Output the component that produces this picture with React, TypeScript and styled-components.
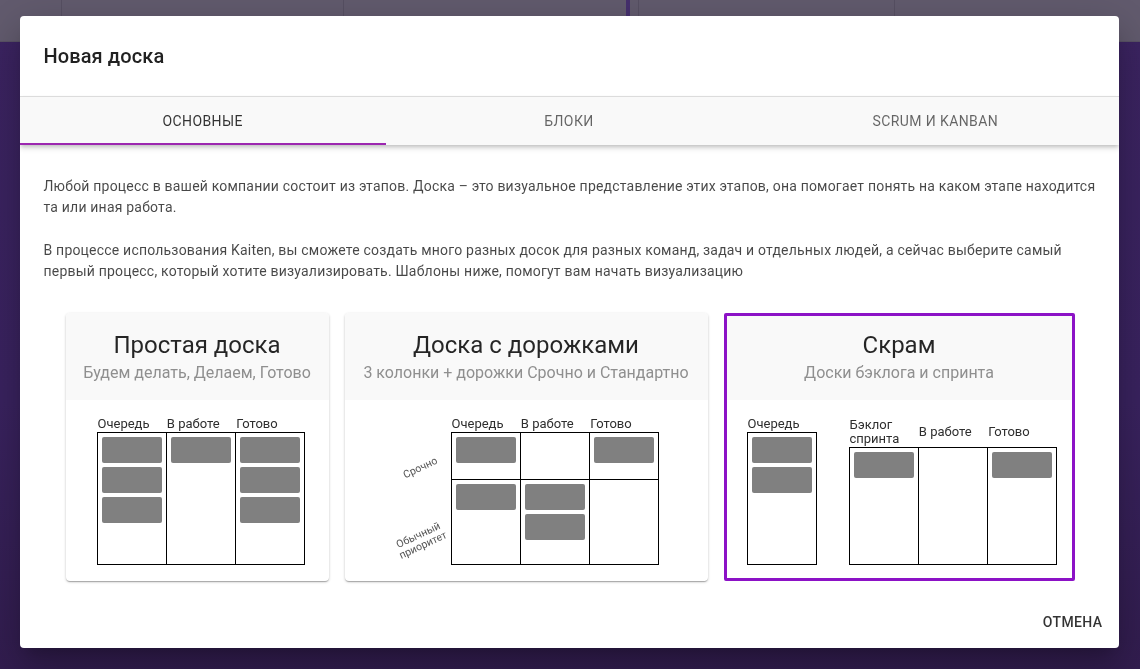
import React, { useState } from 'react';
import styled, { createGlobalStyle, css } from 'styled-components';

const GlobalStyle = createGlobalStyle`
  html, body {
    margin: 0;
    padding: 0;
    height: 100%;
  }
  body {
    font-family: Roboto, "Noto Sans", Arial, sans-serif;
    overflow: hidden;
  }
  #root {
    height: 100%;
  }
`;

// dimmed board that sits behind the dialog
const Page = styled.div`
  height: 100vh;
  display: flex;
  flex-direction: column;
  background: linear-gradient(180deg, #3c2462 0%, #3a2360 60%, #321d4f 100%);
`;

const BoardBar = styled.div`
  height: 41px;
  display: flex;
  background: #625b6e;
  border-bottom: 1px solid #5a5366;
`;

const BarCell = styled.div<{ $w: number; $accent?: boolean }>`
  width: ${({ $w }) => $w}px;
  flex: none;
  border-right: 1px solid ${({ $accent }) => ($accent ? '#46306e' : '#575063')};
  ${({ $accent }) =>
    $accent &&
    css`
      border-right-width: 4px;
    `}
`;

const Overlay = styled.div`
  position: fixed;
  inset: 0;
  display: flex;
  align-items: flex-start;
  justify-content: center;
  padding-top: 16px;
  box-sizing: border-box;
`;

const Dialog = styled.div`
  width: 1099px;
  height: 632px;
  margin-left: -2px;
  background: #fff;
  border-radius: 4px;
  display: flex;
  flex-direction: column;
  overflow: hidden;
  box-shadow: 0 11px 15px -7px rgba(0, 0, 0, 0.2), 0 24px 38px 3px rgba(0, 0, 0, 0.14),
    0 9px 46px 8px rgba(0, 0, 0, 0.12);
`;

const Title = styled.h2`
  margin: 0;
  padding: 24px 24px;
  font-size: 20px;
  line-height: 32px;
  font-weight: 500;
  color: rgba(0, 0, 0, 0.87);
  letter-spacing: 0.1px;
`;

const TabBar = styled.div`
  display: flex;
  background: #f9f9f9;
  border-top: 1px solid #dcdcdc;
  box-shadow: 0 2px 4px -1px rgba(0, 0, 0, 0.2), 0 4px 5px 0 rgba(0, 0, 0, 0.1);
  position: relative;
  z-index: 1;
`;

const Tab = styled.button<{ $active?: boolean }>`
  all: unset;
  flex: 1;
  height: 48px;
  display: flex;
  align-items: center;
  justify-content: center;
  font-family: Roboto, sans-serif;
  font-size: 14px;
  letter-spacing: 0.4px;
  text-transform: uppercase;
  cursor: pointer;
  box-sizing: border-box;
  color: ${({ $active }) => ($active ? 'rgba(0,0,0,0.8)' : 'rgba(0,0,0,0.6)')};
  border-bottom: 2px solid ${({ $active }) => ($active ? '#9c27b0' : 'transparent')};
  padding-top: 2px;
`;

const Content = styled.div`
  flex: 1;
  padding: 31px 18px 0 24px;
`;

const Text = styled.p`
  margin: 0 0 22px;
  font-size: 14px;
  line-height: 21px;
  letter-spacing: 0.2px;
  color: rgba(0, 0, 0, 0.72);
`;

const Templates = styled.div`
  display: flex;
  justify-content: center;
  gap: 16px;
  margin-top: 31px;
  padding-right: 4px;
`;

const Card = styled.div<{ $w: number; $selected?: boolean }>`
  width: ${({ $w }) => $w}px;
  height: 268px;
  box-sizing: border-box;
  border-radius: 4px;
  background: #fff;
  overflow: hidden;
  cursor: pointer;
  display: flex;
  flex-direction: column;
  ${({ $selected }) =>
    $selected
      ? css`
          border: 3px solid #8c12c6;
          border-radius: 2px;
        `
      : css`
          box-shadow: 0 1px 3px rgba(0, 0, 0, 0.2), 0 1px 1px rgba(0, 0, 0, 0.14),
            0 2px 1px -1px rgba(0, 0, 0, 0.12);
        `}
`;

const CardHead = styled.div<{ $selected?: boolean }>`
  background: #f9f9f9;
  text-align: center;
  padding: ${({ $selected }) => ($selected ? '13px' : '16px')} 8px 15px;
`;

const CardTitle = styled.div`
  font-size: 24px;
  line-height: 32px;
  color: rgba(0, 0, 0, 0.85);
`;

const CardSub = styled.div`
  font-size: 16px;
  line-height: 24px;
  color: #8f8f8f;
  white-space: nowrap;
`;

const CardBody = styled.div<{ $pl: number; $selected?: boolean }>`
  flex: 1;
  display: flex;
  align-items: flex-end;
  gap: 32px;
  padding: 0 0 ${({ $selected }) => ($selected ? 13 : 16)}px ${({ $pl }) => $pl}px;
`;

const Board = styled.div<{ $w: number }>`
  width: ${({ $w }) => $w}px;
  display: flex;
  flex-direction: column;
`;

const Heads = styled.div<{ $cols: number }>`
  display: grid;
  grid-template-columns: repeat(${({ $cols }) => $cols}, 1fr);
  align-items: center;
  padding-bottom: 1px;
`;

const Head = styled.div`
  font-size: 13px;
  line-height: 14px;
  color: #2e2e2e;
  padding-left: 1px;
`;

const Table = styled.div<{ $cols: number; $rows: string; $h: number }>`
  height: ${({ $h }) => $h}px;
  box-sizing: border-box;
  border: 1px solid #000;
  display: grid;
  grid-template-columns: repeat(${({ $cols }) => $cols}, 1fr);
  grid-template-rows: ${({ $rows }) => $rows};
`;

const Cell = styled.div<{ $first?: boolean; $top?: boolean }>`
  display: flex;
  flex-direction: column;
  gap: 4px;
  padding: 4px;
  border-left: ${({ $first }) => ($first ? 'none' : '1px solid #000')};
  border-top: ${({ $top }) => ($top ? '1px solid #000' : 'none')};
`;

const Sticker = styled.div`
  height: 26px;
  width: 60px;
  border-radius: 2px;
  background: #808080;
`;

const Lanes = styled.div`
  width: 56px;
  height: 133px;
  display: grid;
  grid-template-rows: 47px 1fr;
`;

const Lane = styled.div<{ $pb: number }>`
  display: flex;
  align-items: flex-end;
  justify-content: center;
  padding-bottom: ${({ $pb }) => $pb}px;
`;

const LaneLabel = styled.span`
  display: block;
  font-size: 10.5px;
  line-height: 11px;
  color: #555;
  text-align: center;
  transform: rotate(-25deg);
  margin-right: 12px;
`;

const Row = styled.div`
  display: flex;
  align-items: flex-end;
`;

const Footer = styled.div`
  display: flex;
  justify-content: flex-end;
  padding: 8px 8px 8px;
`;

const Button = styled.button`
  all: unset;
  height: 36px;
  padding: 0 8px;
  min-width: 64px;
  box-sizing: border-box;
  display: flex;
  align-items: center;
  justify-content: center;
  font-family: Roboto, sans-serif;
  font-size: 14px;
  font-weight: 500;
  letter-spacing: 0.4px;
  color: rgba(0, 0, 0, 0.8);
  text-transform: uppercase;
  cursor: pointer;
  border-radius: 4px;
`;

const sticks = (n: number) => Array.from({ length: n }, (_, i) => <Sticker key={i} />);

const tabs = ['Основные', 'Блоки', 'Scrum и Kanban'];

export default function App() {
  const [tab, setTab] = useState(0);
  const [picked, setPicked] = useState(2);

  return (
    <>
      <GlobalStyle />
      <Page>
        <BoardBar>
          <BarCell $w={61} />
          <BarCell $w={281} />
          <BarCell $w={282} $accent />
          <BarCell $w={8} />
          <BarCell $w={255} />
        </BoardBar>
      </Page>
      <Overlay>
        <Dialog>
          <Title>Новая доска</Title>
          <TabBar>
            {tabs.map((t, i) => (
              <Tab key={t} $active={tab === i} onClick={() => setTab(i)}>
                {t}
              </Tab>
            ))}
          </TabBar>
          <Content>
            <Text>
              Любой процесс в вашей компании состоит из этапов. Доска – это визуальное представление этих
              этапов, она помогает понять на каком этапе находится та или иная работа.
            </Text>
            <Text>
              В процессе использования Kaiten, вы сможете создать много разных досок для разных команд, задач
              и отдельных людей, а сейчас выберите самый первый процесс, который хотите визуализировать.
              Шаблоны ниже, помогут вам начать визуализацию
            </Text>
            <Templates>
              <Card $w={263} $selected={picked === 0} onClick={() => setPicked(0)}>
                <CardHead $selected={picked === 0}>
                  <CardTitle>Простая доска</CardTitle>
                  <CardSub>Будем делать, Делаем, Готово</CardSub>
                </CardHead>
                <CardBody $pl={31} $selected={picked === 0}>
                  <Board $w={208}>
                    <Heads $cols={3}>
                      <Head>Очередь</Head>
                      <Head>В работе</Head>
                      <Head>Готово</Head>
                    </Heads>
                    <Table $cols={3} $rows="1fr" $h={133}>
                      <Cell $first>{sticks(3)}</Cell>
                      <Cell>{sticks(1)}</Cell>
                      <Cell>{sticks(3)}</Cell>
                    </Table>
                  </Board>
                </CardBody>
              </Card>

              <Card $w={363} $selected={picked === 1} onClick={() => setPicked(1)}>
                <CardHead $selected={picked === 1}>
                  <CardTitle>Доска с дорожками</CardTitle>
                  <CardSub>3 колонки + дорожки Срочно и Стандартно</CardSub>
                </CardHead>
                <CardBody $pl={50} $selected={picked === 1}>
                  <Row>
                    <Lanes>
                      <Lane $pb={6}>
                        <LaneLabel>Срочно</LaneLabel>
                      </Lane>
                      <Lane $pb={14}>
                        <LaneLabel>
                          Обычный
                          <br />
                          приоритет
                        </LaneLabel>
                      </Lane>
                    </Lanes>
                    <Board $w={208}>
                      <Heads $cols={3}>
                        <Head>Очередь</Head>
                        <Head>В работе</Head>
                        <Head>Готово</Head>
                      </Heads>
                      <Table $cols={3} $rows="46px 1fr" $h={133}>
                        <Cell $first>{sticks(1)}</Cell>
                        <Cell />
                        <Cell>{sticks(1)}</Cell>
                        <Cell $first $top>
                          {sticks(1)}
                        </Cell>
                        <Cell $top>{sticks(2)}</Cell>
                        <Cell $top />
                      </Table>
                    </Board>
                  </Row>
                </CardBody>
              </Card>

              <Card $w={351} $selected={picked === 2} onClick={() => setPicked(2)}>
                <CardHead $selected={picked === 2}>
                  <CardTitle>Скрам</CardTitle>
                  <CardSub>Доски бэклога и спринта</CardSub>
                </CardHead>
                <CardBody $pl={20} $selected={picked === 2}>
                  <Board $w={70}>
                    <Heads $cols={1}>
                      <Head>Очередь</Head>
                    </Heads>
                    <Table $cols={1} $rows="1fr" $h={133}>
                      <Cell $first>{sticks(2)}</Cell>
                    </Table>
                  </Board>
                  <Board $w={208}>
                    <Heads $cols={3}>
                      <Head>
                        Бэклог
                        <br />
                        спринта
                      </Head>
                      <Head>В работе</Head>
                      <Head>Готово</Head>
                    </Heads>
                    <Table $cols={3} $rows="1fr" $h={118}>
                      <Cell $first>{sticks(1)}</Cell>
                      <Cell />
                      <Cell>{sticks(1)}</Cell>
                    </Table>
                  </Board>
                </CardBody>
              </Card>
            </Templates>
          </Content>
          <Footer>
            <Button>Отмена</Button>
          </Footer>
        </Dialog>
      </Overlay>
    </>
  );
}
